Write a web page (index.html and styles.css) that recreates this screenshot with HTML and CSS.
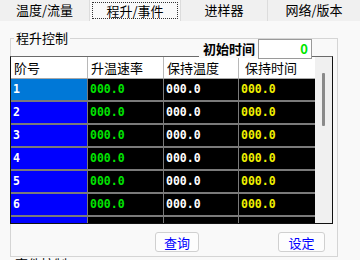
FILE: index.html
```html
<!DOCTYPE html>
<html>
<head>
<meta charset="utf-8">
<link rel="stylesheet" href="styles.css">
</head>
<body>
<div class="app">
  <div class="tabs">
    <div class="tab t1">温度/流量</div>
    <div class="tab t2 active"><span class="focus">程升/事件</span></div>
    <div class="tab t3">进样器</div>
    <div class="tab t4">网络/版本</div>
  </div>
  <div class="page">
    <div class="init">
      <span class="init-label">初始时间</span>
      <div class="init-input">0</div>
    </div>
    <fieldset class="group">
      <legend>程升控制</legend>
      <div class="grid">
        <div class="cells">
          <div class="row head">
            <div class="c c1">阶号</div>
            <div class="c c2">升温速率</div>
            <div class="c c3">保持温度</div>
            <div class="c c4">保持时间</div>
          </div>
          <div class="row">
            <div class="c c1 sel">1</div>
            <div class="c c2 green">000.0</div>
            <div class="c c3 white">000.0</div>
            <div class="c c4 yellow">000.0</div>
          </div>
          <div class="row">
            <div class="c c1">2</div>
            <div class="c c2 green">000.0</div>
            <div class="c c3 white">000.0</div>
            <div class="c c4 yellow">000.0</div>
          </div>
          <div class="row">
            <div class="c c1">3</div>
            <div class="c c2 green">000.0</div>
            <div class="c c3 white">000.0</div>
            <div class="c c4 yellow">000.0</div>
          </div>
          <div class="row">
            <div class="c c1">4</div>
            <div class="c c2 green">000.0</div>
            <div class="c c3 white">000.0</div>
            <div class="c c4 yellow">000.0</div>
          </div>
          <div class="row">
            <div class="c c1">5</div>
            <div class="c c2 green">000.0</div>
            <div class="c c3 white">000.0</div>
            <div class="c c4 yellow">000.0</div>
          </div>
          <div class="row">
            <div class="c c1">6</div>
            <div class="c c2 green">000.0</div>
            <div class="c c3 white">000.0</div>
            <div class="c c4 yellow">000.0</div>
          </div>
          <div class="row">
            <div class="c c1"></div>
            <div class="c c2"></div>
            <div class="c c3"></div>
            <div class="c c4"></div>
          </div>
        </div>
        <div class="vscroll"><div class="thumb"></div></div>
      </div>
      <div class="buttons">
        <button class="btn b-query">查询</button>
        <button class="btn b-set">设定</button>
      </div>
    </fieldset>
    <div class="next-title">事件控制</div>
  </div>
</div>
</body>
</html>
```
FILE: styles.css
```css
html, body {
  margin: 0;
  padding: 0;
}
body {
  width: 360px;
  height: 260px;
  overflow: hidden;
  background: #f9f9f9;
  font-family: "Noto Sans CJK SC", "Noto Sans", sans-serif;
  font-size: 13px;
  color: #000;
}
.app {
  width: 360px;
  height: 260px;
  overflow: hidden;
}
.tabs {
  display: flex;
  height: 21px;
  background: #f0f0f0;
}
.tab {
  box-sizing: border-box;
  height: 21px;
  line-height: 20px;
  text-align: center;
  border-right: 1px solid #dcdcdc;
}
.t1 { width: 90px; }
.t2 { width: 91px; padding: 2px 2px 1px 2px; background: #f9f9f9; }
.t3 { width: 87px; }
.t4 { width: 92px; border-right: none; }
.focus {
  display: block;
  height: 17px;
  line-height: 16px;
  border: 1px dotted #333;
  box-sizing: border-box;
}
.page {
  position: relative;
  height: 239px;
}
.init {
  position: absolute;
  left: 199px;
  top: 9px;
  display: flex;
  align-items: center;
  z-index: 2;
}
.init-label {
  font-weight: bold;
  padding: 0 3px 0 4px;
  background: #f9f9f9;
  line-height: 18px;
}
.init-input {
  box-sizing: border-box;
  width: 54px;
  height: 20px;
  background: #fff;
  border: 1px solid #9a9a9a;
  color: #00e600;
  font-weight: bold;
  text-align: right;
  padding-right: 3px;
  line-height: 17px;
  font-size: 13px;
}
.group {
  box-sizing: border-box;
  margin: 9px 0 0 10px;
  padding: 0 0 4px 0;
  width: 328px;
  border: 1px solid #d5d5d5;
  min-width: 0;
}
.group legend {
  margin-left: 3px;
  padding: 0 2px;
  line-height: 16px;
  height: 16px;
  font-size: 13px;
}
.grid {
  box-sizing: border-box;
  display: flex;
  margin: 10px 0 0 -1px;
  width: 323px;
  height: 168px;
  border: 1px solid #111;
  border-top-color: #6a6a6a;
}
.cells {
  width: 304px;
  height: 166px;
  overflow: hidden;
  background: #000;
}
.row {
  display: flex;
  height: 23px;
  box-sizing: border-box;
  border-bottom: 2px solid #7a7a7a;
}
.row.head {
  height: 22px;
  background: #fff;
  border-bottom: 1px solid #a8a8a8;
}
.c {
  box-sizing: border-box;
  height: 100%;
  border-right: 1px solid #7a7a7a;
  padding-left: 2px;
  font-family: "DejaVu Sans Mono", "Liberation Mono", monospace;
  font-weight: bold;
  font-size: 11.5px;
  line-height: 21px;
  white-space: nowrap;
}
.c1 { width: 77px; background: #0000ff; color: #fff; }
.c1.sel { background: #0078d7; }
.c2 { width: 76px; }
.c3 { width: 75px; }
.c4 { width: 76px; border-right: none; }
.head .c {
  background: #fff;
  color: #000;
  font-family: "Noto Sans CJK SC", "Noto Sans", sans-serif;
  font-weight: normal;
  font-size: 13px;
  line-height: 21px;
  border-right-color: #b8b8b8;
  padding-left: 3px;
}
.head .c4 { padding-left: 6px; }
.green { color: #00e400; }
.white { color: #fff; }
.yellow { color: #f0f000; }
.vscroll {
  width: 17px;
  height: 166px;
  background: #f0f0f0;
  box-sizing: border-box;
  padding: 16px 0 0 7px;
}
.thumb {
  width: 3px;
  height: 53px;
  background: #8a8a8a;
  border-radius: 1px;
}
.buttons {
  display: flex;
  margin-top: 8px;
  padding-left: 144px;
}
.btn {
  box-sizing: border-box;
  height: 20px;
  margin: 0;
  padding: 0;
  background: #fdfdfd;
  border: 1px solid #d0d0d0;
  border-radius: 3px;
  color: #0000ff;
  font-family: "Noto Sans CJK SC", "Noto Sans", sans-serif;
  font-size: 13px;
  line-height: 17px;
}
.b-query { width: 44px; }
.b-set { width: 47px; margin-left: 79px; }
.next-title {
  margin: -1px 0 0 15px;
  line-height: 16px;
}
```
